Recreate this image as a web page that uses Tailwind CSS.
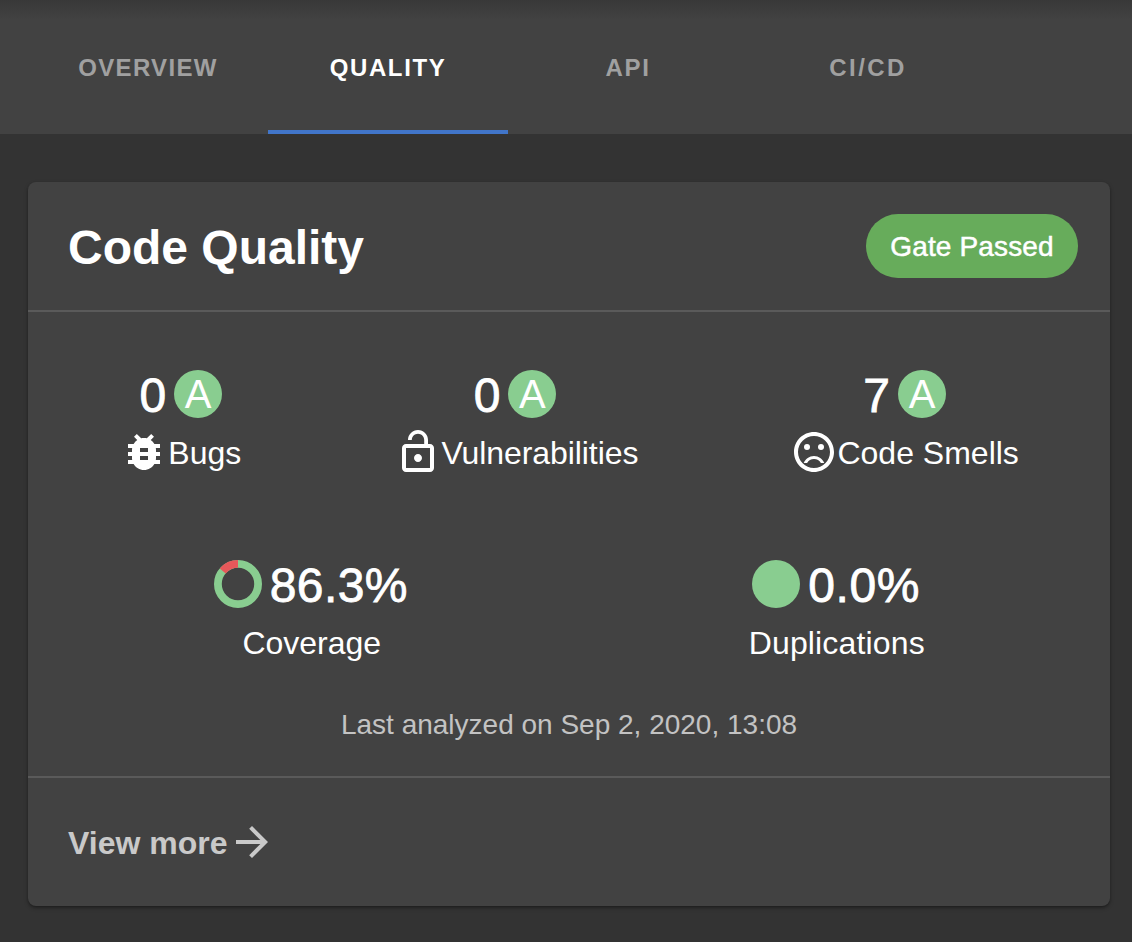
<!DOCTYPE html>
<html lang="en">
<head>
<meta charset="utf-8">
<title>Code Quality</title>
<script src="https://cdn.jsdelivr.net/npm/@tailwindcss/browser@4"></script>
</head>
<body class="h-[942px] w-[1132px] overflow-hidden bg-[#333333] font-['Liberation_Sans',Arial,sans-serif] text-white">
<nav class="flex h-[134px] bg-[#424242] bg-linear-to-b from-[#383838] to-[#424242] to-[20px] pl-7 text-2xl/[48px] font-bold tracking-[1.2px] text-[#a0a0a0]">
  <a class="flex w-60 justify-center border-b-4 border-transparent pt-11"><span class="tracking-[1.3px]">OVERVIEW</span></a>
  <a class="flex w-60 justify-center border-b-4 border-[#4175c9] pt-11 text-white"><span class="tracking-[1.6px]">QUALITY</span></a>
  <a class="flex w-60 justify-center border-b-4 border-transparent pt-11"><span class="tracking-[1.6px]">API</span></a>
  <a class="flex w-60 justify-center border-b-4 border-transparent pt-11"><span class="tracking-[2.4px]">CI/CD</span></a>
</nav>
<main class="pt-12 pl-7">
  <section class="flex h-[724px] w-[1082px] flex-col rounded-lg bg-[#424242] shadow-[0_2px_4px_rgba(0,0,0,0.3),0_1px_2px_rgba(0,0,0,0.2)]">
    <header class="flex h-[130px] items-center justify-between border-b-2 border-[#5a5a5a] pr-8 pl-10">
      <h1 class="pt-1 text-5xl/[56px] font-bold"><span>Code Quality</span></h1>
      <div class="flex h-16 w-[212px] items-center justify-center rounded-full bg-[#67ac5b] pt-px text-[28px] tracking-[0.15px] [-webkit-text-stroke:0.5px_white]"><span>Gate Passed</span></div>
    </header>
    <div class="flex h-[466px] flex-col border-b-2 border-[#5a5a5a] px-4 pt-[58px]">
      <div class="flex justify-around">
        <div class="flex w-[122px] flex-col items-center">
          <div class="flex h-12 items-center gap-2">
            <span class="pt-[3px] text-5xl/[48px] [-webkit-text-stroke:0.8px_white]">0</span>
            <span class="flex size-12 items-center justify-center rounded-full bg-[#89cd90] text-[40px]/[48px]">A</span>
          </div>
          <div class="mt-2.5 flex h-12 items-center">
            <svg class="size-12 shrink-0 fill-white" viewBox="0 0 24 24"><path d="M20 8h-2.81c-.45-.78-1.07-1.45-1.82-1.96L17 4.41 15.59 3l-2.17 2.17C12.96 5.06 12.49 5 12 5c-.49 0-.96.06-1.41.17L8.41 3 7 4.41l1.62 1.63C7.88 6.55 7.26 7.22 6.81 8H4v2h2.09c-.05.33-.09.66-.09 1v1H4v2h2v1c0 .34.04.67.09 1H4v2h2.81c1.04 1.79 2.97 3 5.19 3s4.15-1.21 5.19-3H20v-2h-2.09c.05-.33.09-.66.09-1v-1h2v-2h-2v-1c0-.34-.04-.67-.09-1H20V8zm-6 8h-4v-2h4v2zm0-4h-4v-2h4v2z"/></svg>
            <span class="pt-0.5 text-[32px]/[48px] whitespace-nowrap">Bugs</span>
          </div>
        </div>
        <div class="flex w-[244px] flex-col items-center">
          <div class="flex h-12 items-center gap-2 pr-px">
            <span class="pt-[3px] text-5xl/[48px] [-webkit-text-stroke:0.8px_white]">0</span>
            <span class="flex size-12 items-center justify-center rounded-full bg-[#89cd90] text-[40px]/[48px]">A</span>
          </div>
          <div class="mt-2.5 flex h-12 w-full items-center">
            <svg class="ml-px size-12 shrink-0 fill-white" viewBox="0 0 24 24"><path d="M12 17c1.1 0 2-.9 2-2s-.9-2-2-2-2 .9-2 2 .9 2 2 2zm6-9h-1V6c0-2.76-2.24-5-5-5S7 3.24 7 6h1.9c0-1.71 1.39-3.1 3.1-3.1 1.71 0 3.1 1.39 3.1 3.1v2H6c-1.1 0-2 .9-2 2v10c0 1.1.9 2 2 2h12c1.1 0 2-.9 2-2V10c0-1.1-.9-2-2-2zm0 12H6V10h12v10z"/></svg>
            <span class="-ml-px pt-0.5 text-[32px]/[48px] tracking-[-0.08px] whitespace-nowrap">Vulnerabilities</span>
          </div>
        </div>
        <div class="flex w-[229px] flex-col items-center">
          <div class="flex h-12 items-center gap-2 pl-0.5">
            <span class="pt-[3px] text-5xl/[48px] [-webkit-text-stroke:0.8px_white]">7</span>
            <span class="flex size-12 items-center justify-center rounded-full bg-[#89cd90] text-[40px]/[48px]">A</span>
          </div>
          <div class="mt-2.5 flex h-12 items-center pl-0.5">
            <svg class="size-12 shrink-0 fill-white" viewBox="0 0 24 24"><circle cx="15.5" cy="9.5" r="1.5"/><circle cx="8.5" cy="9.5" r="1.5"/><path d="M12 14c-2.33 0-4.32 1.45-5.12 3.5h1.67c.69-1.19 1.97-2 3.45-2s2.75.81 3.45 2h1.67c-.8-2.05-2.79-3.5-5.12-3.5zm-.01-12C6.47 2 2 6.48 2 12s4.47 10 9.99 10C17.52 22 22 17.52 22 12S17.52 2 11.99 2zM12 20c-4.42 0-8-3.58-8-8s3.58-8 8-8 8 3.58 8 8-3.58 8-8 8z"/></svg>
            <span class="-ml-px pt-0.5 text-[32px]/[48px] whitespace-nowrap">Code Smells</span>
          </div>
        </div>
      </div>
      <div class="mt-[84px] flex justify-around">
        <div class="flex w-[198px] flex-col items-center">
          <div class="flex h-12 w-full items-center gap-2 pl-px">
            <svg class="size-12 shrink-0" viewBox="0 0 48 48" fill="none" stroke-width="7.8"><circle cx="24" cy="24" r="20.1" stroke="#89cd90"/><circle cx="24" cy="24" r="20.1" stroke="#e6585a" pathLength="100" stroke-dasharray="13.7 86.3" stroke-dashoffset="-86.3" transform="rotate(-90 24 24)"/></svg>
            <span class="pt-[3px] text-5xl/[48px] tracking-[0.4px] [-webkit-text-stroke:0.8px_white]">86.3%</span>
          </div>
          <span class="mt-2.5 pt-px text-[32px]/[48px]">Coverage</span>
        </div>
        <div class="flex w-[177px] flex-col items-center">
          <div class="flex h-12 w-full items-center gap-2 pl-1">
            <span class="size-12 shrink-0 rounded-full bg-[#89cd90]"></span>
            <span class="pt-[3px] text-5xl/[48px] tracking-[0.6px] [-webkit-text-stroke:0.8px_white]">0.0%</span>
          </div>
          <span class="mt-2.5 pt-px text-[32px]/[48px] tracking-[0.15px] whitespace-nowrap">Duplications</span>
        </div>
      </div>
      <p class="mt-[38px] text-center text-[28px]/[40px] text-[#c3c3c3]"><span>Last analyzed on Sep 2, 2020, 13:08</span></p>
    </div>
    <footer class="flex h-32 items-center pl-10 text-[#c9c9c9]">
      <span class="pt-0.5 text-[32px]/[48px] font-bold whitespace-nowrap">View more</span>
      <svg class="ml-px size-12 shrink-0 fill-current" viewBox="0 0 24 24"><path d="M12 4l-1.41 1.41L16.17 11H4v2h12.17l-5.58 5.59L12 20l8-8z"/></svg>
    </footer>
  </section>
</main>
</body>
</html>
